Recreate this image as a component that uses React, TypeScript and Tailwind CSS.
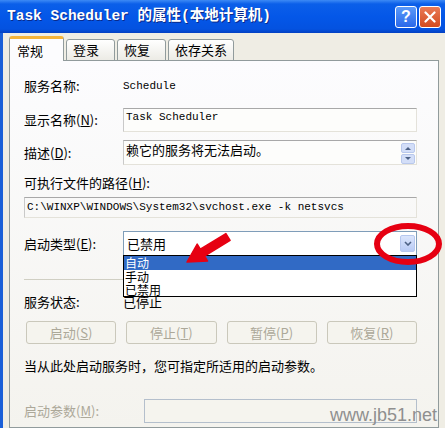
import React from 'react';

const cjk = "font-['Noto_Sans_CJK_SC','Noto_Sans',sans-serif]";
const mono = "font-['Liberation_Mono','Noto_Sans_CJK_SC',monospace]";

const Mn: React.FC<{ k: string }> = ({ k }) => (
  <span>
    (<u>{k}</u>)
  </span>
);

const tabs = ['常规', '登录', '恢复', '依存关系'];

const buttons = [
  { label: '启动', key: 'S' },
  { label: '停止', key: 'T' },
  { label: '暂停', key: 'P' },
  { label: '恢复', key: 'R' },
];

const ScrollArrow: React.FC<{ up?: boolean }> = ({ up }) => (
  <div className="w-[14px] h-[10px] rounded-[2px] border border-[#b9c8ec] bg-[#d3def8] flex items-center justify-center">
    <svg width="6" height="4" viewBox="0 0 6 4">
      {up ? <path d="M0 4 L3 1 L6 4 Z" fill="#4d6185" /> : <path d="M0 0 L3 3 L6 0 Z" fill="#4d6185" />}
    </svg>
  </div>
);

const App: React.FC = () => {
  return (
    <div className={`relative w-[445px] h-[428px] overflow-hidden flex flex-col text-[13px] text-black ${cjk}`}>
      {/* title bar */}
      <div className="h-[33px] shrink-0 flex items-center pl-[7px] pr-[4px] bg-[linear-gradient(to_bottom,#3d8af5_0%,#0b5fe9_12%,#0457e8_50%,#0452e0_88%,#0340c2_100%)]">
        <span className={`text-white font-bold text-[14.5px] [text-shadow:1px_1px_0_#0a2a8a] ${mono}`}>
          Task Scheduler 的属性(本地计算机)
        </span>
        <div className="ml-auto flex items-center gap-[2px]">
          <div className="w-[22px] h-[22px] rounded-[3px] border border-white bg-[linear-gradient(to_bottom,#5b9af9,#2a68ea)] flex items-center justify-center text-white font-bold text-[16px] font-['Liberation_Sans',sans-serif]">
            ?
          </div>
          <div className="w-[22px] h-[22px] rounded-[3px] border border-white bg-[linear-gradient(to_bottom,#ea7a55,#d24a1f)] flex items-center justify-center">
            <svg width="12" height="12" viewBox="0 0 12 12">
              <path d="M1.5 1.5 L10.5 10.5 M10.5 1.5 L1.5 10.5" stroke="white" strokeWidth="2.2" strokeLinecap="round" />
            </svg>
          </div>
        </div>
      </div>

      {/* body */}
      <div className="flex-1 flex flex-col bg-[#efede4] border-l-[3px] border-l-[#1a5fd8] pl-[6px] pr-[6px]">
        {/* tabs */}
        <div className="h-[28px] shrink-0 flex items-end gap-[2px] -mb-px relative z-10">
          {tabs.map((t, i) =>
            i === 0 ? (
              <div
                key={t}
                className="h-[25px] px-[7px] w-[55px] bg-[#fcfcfe] border border-[#919b9c] border-b-0 border-t-[3px] border-t-[#f5b43a] rounded-t-[3px] flex items-start pt-[2px]"
              >
                {t}
              </div>
            ) : (
              <div
                key={t}
                className="h-[22px] px-[6px] bg-[linear-gradient(to_bottom,#ffffff,#ecebe5)] border border-[#919b9c] rounded-t-[3px] flex items-center"
                style={{ minWidth: i === 3 ? 62 : 49 }}
              >
                {t}
              </div>
            )
          )}
        </div>

        {/* panel */}
        <div className="flex-1 border border-[#919b9c] bg-[linear-gradient(to_bottom,#fcfcfe,#f4f3ee)] pl-[14px] pr-[21px] flex flex-col">
          <div className="h-[24px] mt-[13px] flex items-center">
            <div className="w-[99px] shrink-0">服务名称:</div>
            <div className={`text-[11px] ${mono}`}>Schedule</div>
          </div>

          <div className="h-[24px] mt-[10px] flex items-center">
            <div className="w-[99px] shrink-0">
              显示名称<Mn k="N" />:
            </div>
            <div className={`flex-1 self-stretch bg-[#fdfdfb] border border-[#e4e2da] border-t-[#a8a8a8] border-l-[#c9c9c9] pl-[2px] text-[11px] ${mono}`}>
              Task Scheduler
            </div>
          </div>

          <div className="h-[25px] mt-[8px] flex items-center">
            <div className="w-[99px] shrink-0">
              描述<Mn k="D" />:
            </div>
            <div className="flex-1 self-stretch bg-[#fdfdfb] border border-[#e4e2da] border-t-[#a8a8a8] border-l-[#c9c9c9] pl-[2px] flex">
              <div className="flex-1 leading-[18px]">赖它的服务将无法启动。</div>
              <div className="flex flex-col gap-px pt-[2px] pr-[1px]">
                <ScrollArrow up />
                <ScrollArrow />
              </div>
            </div>
          </div>

          <div className="h-[18px] mt-[9px] flex items-center">
            可执行文件的路径<Mn k="H" />:
          </div>

          <div className={`h-[21px] mt-[5px] flex items-center border border-[#e4e2da] border-t-[#a8a8a8] border-l-[#c9c9c9] pl-[2px] text-[11px] ${mono}`}>
            C:\WINXP\WINDOWS\System32\svchost.exe -k netsvcs
          </div>

          <div className="h-[25px] mt-[13px] flex items-center">
            <div className="w-[99px] shrink-0">
              启动类型<Mn k="E" />:
            </div>
            <div className="relative flex-1 self-stretch bg-white border border-[#7f9db9] flex items-center pl-[3px]">
              <span className="flex-1">已禁用</span>
              <div className="w-[15px] h-[17px] mr-[1px] rounded-[2px] border border-[#b6c7ee] bg-[linear-gradient(to_bottom,#dbe5fc,#b9cbf5)] flex items-center justify-center">
                <svg width="8" height="5" viewBox="0 0 8 5">
                  <path d="M1 1 L4 4 L7 1" stroke="#4d6185" strokeWidth="1.6" fill="none" />
                </svg>
              </div>
              {/* open dropdown list */}
              <div className="absolute left-[-1px] top-full w-[294px] bg-white border border-black text-[12px] z-20">
                <div className="h-[14px] leading-[14px] bg-[#316ac5] text-white pl-[1px]">自动</div>
                <div className="h-[13px] leading-[13px] pl-[1px]">手动</div>
                <div className="h-[13px] leading-[13px] pl-[1px]">已禁用</div>
              </div>
            </div>
          </div>

          <div className="h-px mt-[23px] bg-[#d0cfc3]" />

          <div className="h-[22px] mt-[11px] flex items-center">
            <div className="w-[99px] shrink-0">服务状态:</div>
            <div>已停止</div>
          </div>

          <div className="h-[23px] mt-[8px] ml-[2px] grid grid-cols-4 gap-[10px]">
            {buttons.map((b) => (
              <div
                key={b.key}
                className="rounded-[3px] border border-[#cac8bb] bg-[#f5f4ee] text-[#aca899] flex items-center justify-center"
              >
                {b.label}
                <Mn k={b.key} />
              </div>
            ))}
          </div>

          <div className="h-[18px] mt-[13px] flex items-center">当从此处启动服务时，您可指定所适用的启动参数。</div>

          <div className="h-[24px] mt-[24px] flex items-center">
            <div className="w-[120px] shrink-0 text-[#aca899]">
              启动参数<Mn k="M" />:
            </div>
            <div className="flex-1 self-stretch border border-[#b4bfcc] bg-[#f5f4ee]" />
          </div>
        </div>
      </div>

      {/* annotation overlay */}
      <svg className="absolute inset-0 pointer-events-none z-30" width="445" height="428" viewBox="0 0 445 428">
        <ellipse cx="408" cy="244" rx="31" ry="18" fill="none" stroke="#e60012" strokeWidth="6" />
        <polygon
          points="225.9,233.6 200.3,249.2 197.2,244.1 187,262 207.6,261.1 204.5,256 230.1,240.4"
          fill="#e60012"
          stroke="#e60012"
          strokeWidth="1.5"
          strokeLinejoin="round"
        />
      </svg>

      <div className="absolute left-[330px] top-[402px] z-30 text-[18px] text-[#8f8f8f] font-['Liberation_Sans',sans-serif]">
        www.jb51.net
      </div>
    </div>
  );
};

export default App;
